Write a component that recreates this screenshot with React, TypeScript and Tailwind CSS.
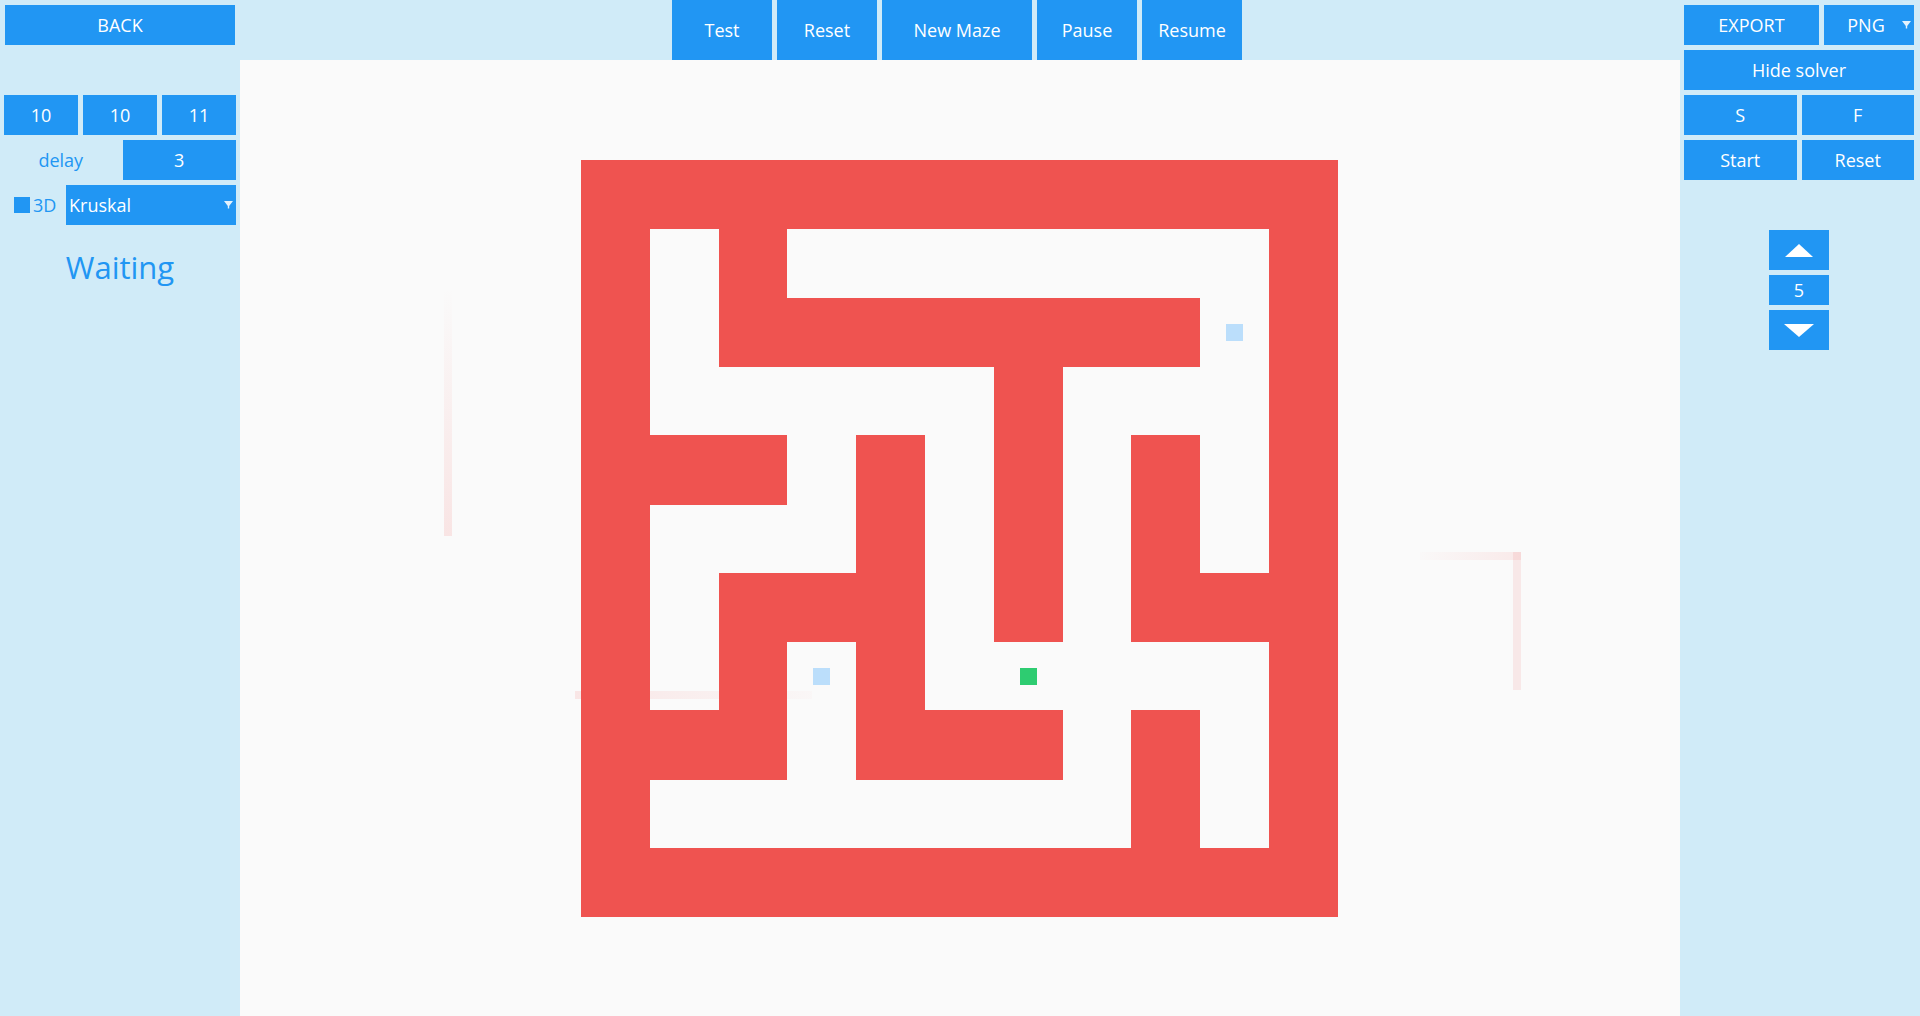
import React from 'react';

// 11x11 block grid of a 5x5 maze: 1 = wall, 0 = passage
const GRID = [
  '11111111111',
  '10100000001',
  '10111111101',
  '10000010001',
  '11101010101',
  '10001010101',
  '10111010111',
  '10101000001',
  '11101110101',
  '10000000101',
  '11111111111',
];

const CELL = 68.8;
const MAZE_X = 341;
const MAZE_Y = 100;

// markers: [row, col, colour]
const MARKERS: [number, number, string][] = [
  [2, 9, '#bbdefb'],
  [7, 3, '#bbdefb'],
  [7, 6, '#2ecc71'],
];

function wallRuns() {
  const runs: { r: number; c: number; len: number }[] = [];
  GRID.forEach((row, r) => {
    let c = 0;
    while (c < row.length) {
      if (row[c] === '1') {
        let e = c;
        while (e < row.length && row[e] === '1') e++;
        runs.push({ r, c, len: e - c });
        c = e;
      } else {
        c++;
      }
    }
  });
  return runs;
}

function Btn({ children, className = '' }: { children: React.ReactNode; className?: string }) {
  return (
    <div className={`flex items-center justify-center bg-[#2196f3] text-white text-[18px] font-medium ${className}`}>
      {children}
    </div>
  );
}

function SelectArrow() {
  return (
    <svg width="9" height="8" viewBox="0 0 9 8" className="shrink-0">
      <path d="M0 0 H9 L5.2 5 V7.5 H3.8 V5 Z" fill="#e3f2fd" />
    </svg>
  );
}

function MazeCanvas() {
  const runs = wallRuns();
  return (
    <svg width="1440" height="956" viewBox="0 0 1440 956" className="block" shapeRendering="crispEdges">
      <defs>
        <linearGradient id="fadeV" x1="0" y1="0" x2="0" y2="1">
          <stop offset="0" stopColor="#ef5350" stopOpacity="0" />
          <stop offset="1" stopColor="#ef5350" stopOpacity="0.13" />
        </linearGradient>
        <linearGradient id="fadeH" x1="0" y1="0" x2="1" y2="0">
          <stop offset="0" stopColor="#ef5350" stopOpacity="0.12" />
          <stop offset="1" stopColor="#ef5350" stopOpacity="0.02" />
        </linearGradient>
        <linearGradient id="fadeHr" x1="0" y1="0" x2="1" y2="0">
          <stop offset="0" stopColor="#ef5350" stopOpacity="0.01" />
          <stop offset="1" stopColor="#ef5350" stopOpacity="0.1" />
        </linearGradient>
      </defs>

      {/* faint ghost edges behind the maze */}
      <rect x="204" y="227" width="8" height="249" fill="url(#fadeV)" />
      <rect x="335" y="631" width="237" height="8" fill="url(#fadeH)" />
      <rect x="1180" y="492" width="101" height="8" fill="url(#fadeHr)" />
      <rect x="1273" y="492" width="8" height="138" fill="#ef5350" fillOpacity="0.1" />

      {runs.map((w, i) => (
        <rect
          key={i}
          x={MAZE_X + w.c * CELL}
          y={MAZE_Y + w.r * CELL}
          width={w.len * CELL}
          height={CELL + 0.5}
          fill="#ef5350"
        />
      ))}

      {MARKERS.map(([r, c, col], i) => (
        <rect
          key={i}
          x={MAZE_X + c * CELL + CELL / 2 - 8.5}
          y={MAZE_Y + r * CELL + CELL / 2 - 8.5}
          width="17"
          height="17"
          fill={col}
        />
      ))}
    </svg>
  );
}

export default function App() {
  return (
    <div className="flex h-[1016px] w-[1920px] overflow-hidden bg-[#d0ebf8] font-['Open_Sans',sans-serif]">
      {/* Left panel */}
      <aside className="flex w-[240px] shrink-0 flex-col px-[4px] pt-[5px]">
        <Btn className="mx-[1px] h-[40px]">BACK</Btn>

        <div className="mt-[50px] grid h-[40px] grid-cols-3 gap-[5px]">
          <Btn>10</Btn>
          <Btn>10</Btn>
          <Btn>11</Btn>
        </div>

        <div className="mt-[5px] grid h-[40px] grid-cols-2 gap-[5px]">
          <div className="flex items-center justify-center text-[18px] font-medium text-[#2196f3]">delay</div>
          <Btn>3</Btn>
        </div>

        <div className="mt-[5px] flex h-[40px] gap-[5px]">
          <div className="flex w-[57px] items-center pl-[10px]">
            <div className="h-[16px] w-[16px] bg-[#2196f3]" />
            <span className="ml-[3px] text-[18px] font-medium text-[#2196f3]">3D</span>
          </div>
          <div className="flex flex-1 items-center bg-[#2196f3] pl-[3px] pr-[3px] text-[18px] font-medium text-white">
            <span className="flex-1">Kruskal</span>
            <SelectArrow />
          </div>
        </div>

        <div className="mt-[22px] text-center text-[31px] font-medium leading-[40px] text-[#2196f3]">Waiting</div>
      </aside>

      {/* Centre */}
      <main className="flex min-w-0 flex-1 flex-col">
        <div className="flex h-[60px] shrink-0 justify-center gap-[5px] pr-[6px]">
          <Btn className="w-[100px]">Test</Btn>
          <Btn className="w-[100px]">Reset</Btn>
          <Btn className="w-[150px]">New Maze</Btn>
          <Btn className="w-[100px]">Pause</Btn>
          <Btn className="w-[100px]">Resume</Btn>
        </div>
        <div className="flex-1 bg-[#fafafa]">
          <MazeCanvas />
        </div>
      </main>

      {/* Right panel */}
      <aside className="flex w-[240px] shrink-0 flex-col pl-[4px] pr-[6px] pt-[5px]">
        <div className="flex h-[40px] gap-[5px]">
          <Btn className="w-[135px]">EXPORT</Btn>
          <div className="flex flex-1 items-center bg-[#2196f3] pr-[3px] text-[18px] font-medium text-white">
            <span className="flex-1 pl-[6px] text-center">PNG</span>
            <SelectArrow />
          </div>
        </div>
        <Btn className="mt-[5px] h-[40px]">Hide solver</Btn>
        <div className="mt-[5px] grid h-[40px] grid-cols-2 gap-[5px]">
          <Btn>S</Btn>
          <Btn>F</Btn>
        </div>
        <div className="mt-[5px] grid h-[40px] grid-cols-2 gap-[5px]">
          <Btn>Start</Btn>
          <Btn>Reset</Btn>
        </div>

        <div className="mx-auto mt-[50px] flex w-[60px] flex-col gap-[5px]">
          <Btn className="h-[40px]">
            <svg width="28" height="13" viewBox="0 0 28 13">
              <path d="M0 13 L14 0 L28 13 Z" fill="#fff" />
            </svg>
          </Btn>
          <Btn className="h-[30px] text-[16px]">5</Btn>
          <Btn className="h-[40px]">
            <svg width="30" height="13" viewBox="0 0 30 13">
              <path d="M0 0 L30 0 L15 13 Z" fill="#fff" />
            </svg>
          </Btn>
        </div>
      </aside>
    </div>
  );
}
